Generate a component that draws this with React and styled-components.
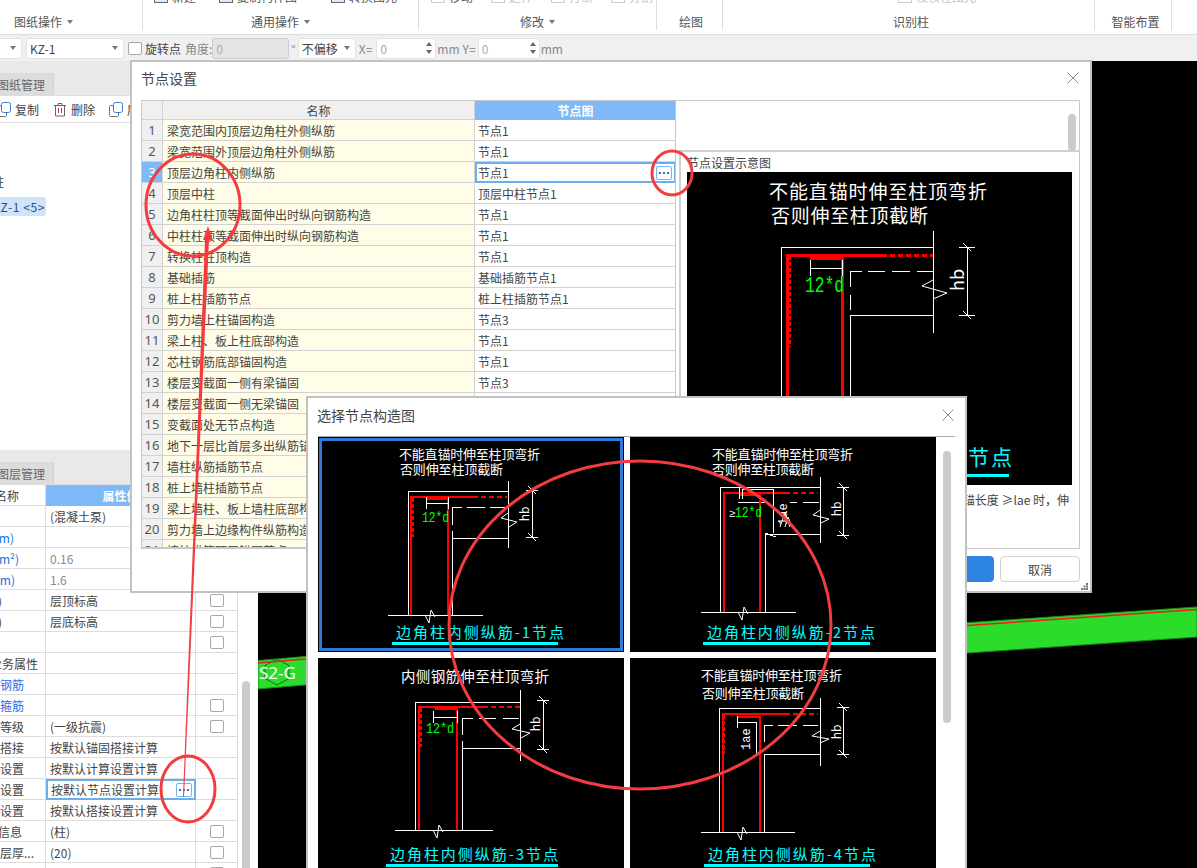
import React from 'react';
import styled, { createGlobalStyle } from 'styled-components';

const GlobalStyle = createGlobalStyle`
  html, body {
    margin: 0;
    height: 100%;
    overflow: hidden;
    background: #fff;
    font-family: "Noto Sans CJK SC", "Noto Sans", sans-serif;
    font-size: 12px;
    color: #444;
  }
  * { box-sizing: border-box; }
`;

const Page = styled.div`
  position: relative;
  width: 1197px;
  height: 868px;
  overflow: hidden;
  display: flex;
  flex-direction: column;
`;

/* ribbon */
const Ribbon = styled.div`
  display: flex;
  height: 35px;
  border-bottom: 1px solid #ddd;
  background: #fff;
  flex: none;
`;

const Group = styled.div`
  width: ${(p) => p.$w}px;
  margin-left: ${(p) => p.$ml || 0}px;
  height: 30px;
  border-right: ${(p) => (p.$last ? 'none' : '1px solid #ddd')};
  display: flex;
  flex-direction: column;
  flex: none;
`;

const Strip = styled.div`
  height: 7px;
  overflow: hidden;
  display: flex;
  align-items: flex-end;
  padding-left: ${(p) => p.$pad}px;
  gap: ${(p) => p.$gap || 0}px;
`;

const StripTool = styled.div`
  display: flex;
  align-items: center;
  gap: 4px;
  height: 16px;
  margin-bottom: 3px;
  margin-left: ${(p) => p.$ml || 0}px;
  flex: none;
  color: ${(p) => (p.$off ? '#c4c4c4' : '#555')};
`;

const StripIcon = styled.span`
  width: 14px;
  height: 14px;
  border: 1px solid ${(p) => (p.$off ? '#ccc' : '#667')};
  background: ${(p) => (p.$off ? '#fff' : '#dfe9f7')};
  flex: none;
`;

const GroupLabel = styled.div`
  flex: 1;
  display: flex;
  align-items: center;
  justify-content: center;
  gap: 5px;
  padding-top: 6px;
  padding-left: ${(p) => p.$shift || 0}px;
  color: #555;
  line-height: 16px;
`;

const Caret = styled.span`
  width: 0;
  height: 0;
  flex: none;
  border-left: 3.5px solid transparent;
  border-right: 3.5px solid transparent;
  border-top: 4px solid #777;
`;

/* options bar */
const OptionsBar = styled.div`
  display: flex;
  align-items: center;
  height: 26px;
  background: #f0f0f0;
  flex: none;
`;

const Select = styled.div`
  height: 21px;
  width: ${(p) => p.$w}px;
  margin-left: ${(p) => p.$ml || 0}px;
  background: #fff;
  border: 1px solid #e2e2e2;
  border-radius: 3px;
  display: flex;
  align-items: center;
  justify-content: space-between;
  padding: 0 5px 0 3px;
  color: #444;
  flex: none;
`;

const Check = styled.span`
  width: 14px;
  height: 13px;
  margin-left: ${(p) => p.$ml || 0}px;
  background: #fff;
  border: 1px solid #a8a8a8;
  border-radius: 2px;
  flex: none;
  display: block;
`;

const OptionLabel = styled.span`
  margin-left: ${(p) => p.$ml || 0}px;
  color: ${(p) => (p.$dim ? '#888' : '#444')};
  white-space: nowrap;
  flex: none;
`;

const NumberBox = styled.div`
  height: 21px;
  width: ${(p) => p.$w}px;
  margin-left: ${(p) => p.$ml || 0}px;
  background: ${(p) => (p.$disabled ? '#e4e4e4' : '#fff')};
  border: 1px solid ${(p) => (p.$disabled ? '#c5ccd6' : '#e4e4e4')};
  border-radius: 3px;
  display: flex;
  align-items: center;
  justify-content: space-between;
  padding: 0 3px;
  color: #aaa;
  flex: none;
`;

const Spin = styled.span`
  display: flex;
  flex-direction: column;
  gap: 4px;
  i {
    display: block;
    width: 0;
    height: 0;
    border-left: 3px solid transparent;
    border-right: 3px solid transparent;
  }
  i:first-child { border-bottom: 4px solid #666; }
  i:last-child { border-top: 4px solid #666; }
`;

/* main */
const Main = styled.div`
  flex: 1;
  display: flex;
  min-height: 0;
`;

const LeftPanel = styled.div`
  width: 258px;
  flex: none;
  display: flex;
  flex-direction: column;
  background: #fff;
`;

const Section = styled.section`
  height: ${(p) => p.$h}px;
  flex: none;
  display: flex;
  flex-direction: column;
  overflow: hidden;
`;

const TabBar = styled.div`
  height: 35px;
  padding-top: 12px;
  background: #e9e9e9;
  flex: none;
  border-bottom: 1px solid #ddd;
`;

const Tab = styled.div`
  width: 54px;
  height: 22px;
  background: #dcdcdc;
  border-right: 1px solid #cfcfcf;
  display: flex;
  align-items: center;
  justify-content: flex-end;
  padding-right: 8px;
  color: #666;
  white-space: nowrap;
`;

const ToolRow = styled.div`
  height: 27px;
  flex: none;
  display: flex;
  align-items: center;
  gap: 14px;
  border-bottom: 1px solid #ddd;
`;

const ToolItem = styled.div`
  display: flex;
  align-items: center;
  gap: 4px;
  flex: none;
  color: #444;
`;

const Tree = styled.div`
  padding-top: 49px;
  display: flex;
  flex-direction: column;
  gap: 6px;
`;

const TreeItem = styled.div`
  width: 46px;
  height: 19px;
  display: flex;
  align-items: center;
  justify-content: flex-end;
  white-space: pre;
  padding-right: ${(p) => p.$end}px;
  background: ${(p) => (p.$active ? '#cfe3fa' : 'transparent')};
  border-radius: 0 3px 3px 0;
  letter-spacing: ${(p) => (p.$active ? 0.6 : 0)}px;
  color: ${(p) => (p.$active ? '#23527f' : '#444')};
`;

const PropsArea = styled.div`
  flex: 1;
  display: flex;
  min-height: 0;
`;

const PropsTable = styled.div`
  width: 238px;
  flex: none;
  border-right: 1px solid #ddd;
`;

const PropRow = styled.div`
  display: grid;
  grid-template-columns: 46px 150px 41px;
  height: 21px;
`;

const PropName = styled.div`
  display: flex;
  align-items: center;
  justify-content: flex-end;
  overflow: hidden;
  white-space: nowrap;
  padding-right: ${(p) => p.$end || 0}px;
  border-right: 1px solid #ddd;
  border-bottom: 1px solid #ddd;
  color: ${(p) => (p.$blue ? '#1a6fe6' : '#444')};
`;

const PropValue = styled.div`
  position: relative;
  display: flex;
  align-items: center;
  padding-left: ${(p) => (p.$active ? 3 : 4)}px;
  border-right: ${(p) => (p.$active ? '2px solid #6aaeee' : '1px solid #ddd')};
  border-bottom: ${(p) => (p.$active ? '2px solid #6aaeee' : '1px solid #ddd')};
  border-left: ${(p) => (p.$active ? '2px solid #6aaeee' : 'none')};
  border-top: ${(p) => (p.$active ? '2px solid #6aaeee' : 'none')};
  color: ${(p) => (p.$dim ? '#888' : '#444')};
  white-space: nowrap;
`;

const PropCheck = styled.div`
  display: flex;
  align-items: center;
  justify-content: center;
  border-bottom: 1px solid #ddd;
`;

const HeaderValue = styled.div`
  background: #7fb9f8;
  color: #fff;
  font-weight: 700;
  display: flex;
  align-items: center;
  justify-content: center;
  border-right: 1px solid #ddd;
`;

const Gutter = styled.div`
  flex: 1;
  padding: ${(p) => p.$top}px 0 0 ${(p) => p.$left}px;
`;

const Thumb = styled.div`
  width: 8px;
  height: ${(p) => p.$h}px;
  background: #cbcbcb;
  border-radius: 4px;
`;

const MoreButton = styled.span`
  position: absolute;
  right: ${(p) => p.$right}px;
  top: 2px;
  width: 16px;
  height: 14px;
  background: #fff;
  border: 1px solid #7ab4ee;
  border-radius: 2px;
  display: flex;
  align-items: center;
  justify-content: center;
  gap: 2px;
  i {
    width: 2px;
    height: 2px;
    background: #2f6fc6;
    display: block;
  }
`;

const Canvas = styled.div`
  flex: 1;
  background: #000;
  position: relative;
  overflow: hidden;
`;

const CanvasDrawing = styled.svg`
  display: block;
  width: 100%;
  height: 100%;
`;

const BandLabel = styled.text`
  font-family: "Noto Sans", sans-serif;
  font-size: 17px;
  fill: #fff;
`;

/* dialogs */
const Dialog = styled.div`
  position: absolute;
  left: ${(p) => p.$left}px;
  top: ${(p) => p.$top}px;
  width: ${(p) => p.$w}px;
  height: ${(p) => p.$h}px;
  background: #fff;
  border: 2px solid #c2c2c2;
  display: flex;
  flex-direction: column;
`;

const DialogHead = styled.div`
  height: 38px;
  flex: none;
  display: flex;
  align-items: center;
  justify-content: space-between;
  padding: 0 ${(p) => p.$right}px ${(p) => p.$bottom}px 9px;
  font-size: 14px;
  color: #444;
`;

const CloseX = () => (
  <svg width="12" height="12" viewBox="0 0 12 12">
    <path d="M0.5 0.5 11.5 11.5M11.5 0.5 0.5 11.5" stroke="#8f8f8f" strokeWidth="1" fill="none" />
  </svg>
);

const SettingsBody = styled.div`
  margin: 0 10px 0 9px;
  height: 449px;
  flex: none;
  display: flex;
  border: 1px solid #c8c8c8;
  border-left: none;
`;

const NodeTable = styled.div`
  width: 535px;
  flex: none;
  overflow: hidden;
  border-left: 1px solid #c8c8c8;
  border-right: 1px solid #c8c8c8;
  border-bottom: 1px solid #c8c8c8;
`;

const NodeRow = styled.div`
  display: grid;
  grid-template-columns: 21px 312px 201px;
  height: ${(p) => (p.$head ? 19 : 21)}px;
`;

const IndexCell = styled.div`
  display: flex;
  align-items: center;
  justify-content: center;
  background: ${(p) => (p.$active ? '#7fb9f8' : '#f0f0f0')};
  color: ${(p) => (p.$active ? '#fff' : '#555')};
  border-right: 1px solid #d2d2d2;
  border-bottom: 1px solid #d2d2d2;
  font-family: "Noto Sans", sans-serif;
  font-size: 13px;
`;

const NameCell = styled.div`
  display: flex;
  align-items: center;
  justify-content: ${(p) => (p.$head ? 'center' : 'flex-start')};
  padding-left: ${(p) => (p.$head ? 0 : 4)}px;
  background: ${(p) => (p.$head ? '#f0f0f0' : '#fffde8')};
  border-right: 1px solid #d2d2d2;
  border-bottom: 1px solid #d2d2d2;
  white-space: nowrap;
  overflow: hidden;
`;

const ValueCell = styled.div`
  position: relative;
  display: flex;
  align-items: center;
  padding-left: ${(p) => (p.$active ? 1 : 3)}px;
  border: ${(p) => (p.$active ? '2px solid #6aaeee' : 'none')};
  border-bottom: ${(p) => (p.$active ? '2px solid #6aaeee' : '1px solid #d2d2d2')};
`;

const HeadNode = styled.div`
  background: #7fb9f8;
  color: #fff;
  font-weight: 700;
  display: flex;
  align-items: center;
  justify-content: center;
`;

const PreviewSide = styled.div`
  flex: 1;
  min-width: 0;
  display: flex;
  flex-direction: column;
`;

const PreviewTop = styled.div`
  height: 49px;
  flex: none;
  display: flex;
  justify-content: flex-end;
  padding: 13px 3px 0 0;
`;

const PreviewPanel = styled.div`
  flex: 1;
  margin-left: 3px;
  border: 2px solid #d0d0d0;
  border-bottom: none;
  border-right: none;
  padding: 0 7px 0 6px;
  min-height: 0;
`;

const PreviewCaption = styled.div`
  height: 20px;
  line-height: 22px;
  white-space: nowrap;
  color: #444;
`;

const PreviewNote = styled.div`
  display: flex;
  justify-content: flex-end;
  padding: 6px 3px 0 0;
  white-space: nowrap;
  overflow: hidden;
  color: #444;
`;

const DialogFoot = styled.div`
  display: flex;
  justify-content: flex-end;
  gap: 6px;
  padding: 7px 10px 0 0;
`;

const Button = styled.button`
  width: 80px;
  height: 26px;
  border-radius: 4px;
  border: 1px solid ${(p) => (p.$primary ? '#2e84e2' : '#cfcfcf')};
  background: ${(p) => (p.$primary ? '#2e84e2' : '#fff')};
  color: ${(p) => (p.$primary ? '#fff' : '#444')};
  font-family: inherit;
  font-size: 12px;
  padding: 0;
`;

const Grip = styled.svg`
  position: absolute;
  right: 2px;
  bottom: 1px;
`;

const PickerBody = styled.div`
  margin-left: 10px;
  width: 637px;
  border-top: 1px solid #aaa;
  display: flex;
  flex: 1;
  min-height: 0;
`;

const PickerGrid = styled.div`
  width: 618px;
  flex: none;
  display: grid;
  grid-template-columns: 306px 306px;
  grid-auto-rows: 215px;
  column-gap: 6px;
  row-gap: 6px;
`;

const NodeCard = styled.div`
  background: #000;
  position: relative;
  box-shadow: ${(p) => (p.$selected ? 'inset 0 0 0 1px #000, inset 0 0 0 4px #2e7bd9' : 'none')};
`;

const DiagramSvg = styled.svg`
  display: block;
`;

const Ink = styled.path`
  fill: none;
  stroke: ${(p) => p.$color || '#fff'};
  stroke-width: ${(p) => p.$w || 1}px;
  stroke-dasharray: ${(p) => p.$dash || 'none'};
  shape-rendering: crispEdges;
`;

const DiagramText = styled.text`
  font-family: ${(p) => (p.$mono ? '"Liberation Mono", monospace' : '"Noto Sans CJK SC", sans-serif')};
  font-size: ${(p) => p.$size}px;
  fill: ${(p) => p.$color || '#fff'};
`;

const Underline = styled.rect`
  fill: #0ff;
`;

const MarkerLayer = styled.svg`
  position: absolute;
  left: 0;
  top: 0;
  pointer-events: none;
`;

const CopyGlyph = ({ ml }) => (
  <svg width="14" height="15" viewBox="0 0 14 15" style={{ marginLeft: ml }}>
    <rect x="0.5" y="3.5" width="9" height="11" rx="1" fill="#fff" stroke="#777" />
    <rect x="4.5" y="0.5" width="9" height="10" rx="2" fill="#fff" stroke="#2f7fe0" />
  </svg>
);

const TrashGlyph = () => (
  <svg width="14" height="15" viewBox="0 0 14 15">
    <path d="M1 3.5H13M5 3.500V1.500H9V3.500M2.500 3.500V14H11.500V3.500" fill="none" stroke="#666" />
    <path d="M5.500 6V11M8.500 6V11" stroke="#c33" />
  </svg>
);

const Diagram = ({ d, width = 306, height = 215 }) => {
  const t = d.thick || 2;
  const tick = d.tick || 6;
  const { hb, dim } = d;
  const bx = d.breakX;
  const gy = d.groundY;
  const whites = [
    `M${d.outerX} ${d.topY}H${d.beamX}`,
    `M${d.outerX} ${d.topY}V${gy}`,
    `M${d.beamX} ${d.beamY[0]}V${d.beamY[1]}`,
    `M${d.ground[0]} ${gy}H${d.ground[1]}`,
    ...d.innerV.map(([a, b]) => `M${d.innerX} ${a}V${b}`),
    ...d.dashes.map(([a, b]) => `M${a} ${d.dashY}H${b}`),
    `M${d.innerX} ${d.beamBottom}H${d.beamX}`,
  ].join('');
  const hbPath = `M${hb.x} ${hb.y1}V${hb.y2}M${hb.x - tick} ${hb.y1}H${hb.x + tick}M${hb.x - tick} ${hb.y2}H${hb.x + tick}`;
  const hbSlash = `M${hb.x - 4} ${hb.y1 - 4}L${hb.x + 4} ${hb.y1 + 4}M${hb.x - 4} ${hb.y2 - 4}L${hb.x + 4} ${hb.y2 + 4}`;
  return (
    <DiagramSvg width={width} height={height} viewBox={`0 0 ${width} ${height}`}>
      {d.titles.map(([text, x, y, len]) => (
        <DiagramText key={text} x={x} y={y} $size={d.titleSize || 13} textLength={len} lengthAdjust="spacing">
          {text}
        </DiagramText>
      ))}
      <Ink d={whites} />
      <path d={`M${d.brk.map((p) => p.join(' ')).join('L')}`} fill="none" stroke="#fff" />
      <path d={`M${bx} ${gy}L${bx + 4} ${gy + 8}L${bx + 6} ${gy - 5}L${bx + 10} ${gy + 2}`} fill="none" stroke="#fff" />
      <Ink d={hbPath} />
      <path d={hbSlash} fill="none" stroke="#fff" />
      <DiagramText x={hb.tx} y={hb.ty} $size={hb.size || 12} transform={`rotate(-90 ${hb.tx} ${hb.ty})`} textAnchor="middle">
        hb
      </DiagramText>
      <Ink $color="#f00" $w={t} d={`M${d.redX} ${gy}V${d.redY}H${d.redEnd}`} />
      <Ink $color="#f00" $w={t} $dash="5 3" d={`M${d.redEnd} ${d.redY}H${d.redDash}`} />
      {d.redLeft && <Ink $color="#f00" $w={t} $dash="4 2" d={`M${d.redLeft[0]} ${d.redLeft[1]}V${d.redLeft[2]}`} />}
      <Ink $color="#f00" $w={t} d={`M${d.barX} ${gy}V${d.barY}H${d.barLeft}`} />
      {dim && <Ink d={`M${dim.x1} ${dim.y}H${dim.x2}M${dim.x1} ${dim.y - tick}V${dim.y + tick}M${dim.x2} ${dim.y - tick}V${dim.y + tick}`} />}
      {d.label && (
        <DiagramText $mono $color="#0f0" x={d.label[1]} y={d.label[2]} $size={d.labelSize || 15} textLength={d.label[3]} lengthAdjust="spacingAndGlyphs">
          {d.label[0]}
        </DiagramText>
      )}
      {d.extra}
      <DiagramText $color="#0ff" x={d.caption[1]} y={d.caption[2]} $size={d.captionSize || 15} textLength={d.caption[3]} lengthAdjust="spacing">
        {d.caption[0]}
      </DiagramText>
      <Underline x={d.line[0]} y={d.line[2]} width={d.line[1] - d.line[0]} height={d.lineH || 3} />
    </DiagramSvg>
  );
};

const LINE_1 = '不能直锚时伸至柱顶弯折';
const LINE_2 = '否则伸至柱顶截断';

const CARDS = [
  {
    selected: true,
    titles: [[LINE_1, 81, 22, 141], [LINE_2, 82, 37, 103]],
    outerX: 90, topY: 54, beamX: 190, beamY: [44, 111], groundY: 178, ground: [70, 165],
    innerX: 134, innerV: [[70, 88], [94, 178]], dashY: 70, dashes: [[134, 144], [149, 167], [172, 189]],
    beamBottom: 101, brk: [[190, 76], [183, 81], [199, 85], [191, 90]],
    hb: { x: 214, y1: 53, y2: 100, tx: 211, ty: 77 },
    redX: 93, redY: 60, redEnd: 155, redDash: 189, redLeft: [95, 61, 100],
    barX: 130, barY: 62, barLeft: 108, dim: { y: 66, x1: 108, x2: 130 },
    label: ['12*d', 104, 85, 27], breakX: 107,
    caption: ['边角柱内侧纵筋-1节点', 78, 201, 168], line: [74, 240, 205],
  },
  {
    titles: [[LINE_1, 82, 22, 141], [LINE_2, 82, 37, 102]],
    outerX: 90, topY: 50, beamX: 190, beamY: [40, 106], groundY: 175, ground: [71, 166],
    innerX: 135, innerV: [[96, 175]], dashY: 65, dashes: [[108, 135], [160, 167], [173, 189]],
    beamBottom: 97, brk: [[190, 73], [183, 78], [199, 82], [191, 86]],
    hb: { x: 213, y1: 50, y2: 98, tx: 211, ty: 72 },
    redX: 94, redY: 56, redEnd: 155, redDash: 188,
    barX: 130, barY: 58, barLeft: 109, label: ['12*d', 105, 80, 27], breakX: 108,
    extra: (
      <>
        <Ink d="M109 50V62M143 52H112V62M143 52V96M135 96L146 100" />
        <DiagramText $mono x={157} y={88} $size={12} transform="rotate(-90 157 88)">1ae</DiagramText>
        <DiagramText $mono x={99} y={80} $size={11}>≥</DiagramText>
        <path d="M150 90L155 76L160 90M155 90L158 80L162 90" fill="none" stroke="#fff" />
      </>
    ),
    caption: ['边角柱内侧纵筋-2节点', 77, 201, 168], line: [73, 240, 205],
  },
  {
    titles: [['内侧钢筋伸至柱顶弯折', 83, 24, 148]],
    titleSize: 14.5,
    outerX: 97, topY: 44, beamX: 202, beamY: [32, 103], groundY: 172, ground: [77, 175],
    innerX: 144, innerV: [[60, 77], [83, 172]], dashY: 60, dashes: [[144, 155], [161, 178], [185, 201]],
    beamBottom: 90, brk: [[202, 66], [194, 71], [212, 75], [203, 80]],
    hb: { x: 225, y1: 42, y2: 91, tx: 222, ty: 66 },
    redX: 101, redY: 49, redEnd: 165, redDash: 202, redLeft: [103, 50, 89],
    barX: 139, barY: 51, barLeft: 117, dim: { y: 59, x1: 115, x2: 139 },
    label: ['12*d', 108, 75, 28], breakX: 115,
    caption: ['边角柱内侧纵筋-3节点', 72, 202, 168], line: [68, 240, 206],
  },
  {
    titles: [[LINE_1, 71, 22, 141], [LINE_2, 72, 40, 102]],
    outerX: 89, topY: 50, beamX: 190, beamY: [40, 108], groundY: 174, ground: [71, 165],
    innerX: 134, innerV: [[67, 84], [96, 174]], dashY: 67, dashes: [[134, 143], [148, 167], [173, 188]],
    beamBottom: 96, brk: [[190, 73], [182, 78], [199, 81], [190, 85]],
    hb: { x: 213, y1: 49, y2: 96, tx: 211, ty: 74 },
    redX: 93, redY: 56, redEnd: 155, redDash: 188, redLeft: [94, 57, 96],
    barX: 130, barY: 59, barLeft: 108, breakX: 107,
    extra: (
      <>
        <Ink d="M107 64H126V96M107 58V70" />
        <DiagramText $mono x={120} y={92} $size={12} transform="rotate(-90 120 92)">1ae</DiagramText>
      </>
    ),
    caption: ['边角柱内侧纵筋-4节点', 78, 202, 168], line: [74, 240, 206],
  },
];

const PREVIEW = {
  titles: [[LINE_1, 82, 27, 218], [LINE_2, 84, 51, 157]],
  titleSize: 19,
  thick: 3,
  tick: 8,
  outerX: 94, topY: 75, beamX: 246, beamY: [59, 161], groundY: 400, ground: [50, 300],
  innerX: 163, innerV: [[99, 115], [123, 138], [143, 400]], dashY: 99,
  dashes: [[163, 175], [181, 198], [205, 223], [230, 246]],
  beamBottom: 143, brk: [[246, 108], [235, 114], [260, 121], [246, 127]],
  hb: { x: 280, y1: 75, y2: 143, tx: 277, ty: 108, size: 18 },
  redX: 100, redY: 83, redEnd: 195, redDash: 246, redLeft: [102, 84, 175],
  barX: 155, barY: 86, barLeft: 123, dim: { y: 96, x1: 123, x2: 155 },
  label: ['12*d', 118, 120, 39], labelSize: 22, breakX: 130,
  caption: ['边角柱内侧纵筋-1节点', 97, 293, 228], captionSize: 21,
  line: [90, 322, 302], lineH: 3,
};

const NODE_ROWS = [
  ['梁宽范围内顶层边角柱外侧纵筋', '节点1'],
  ['梁宽范围外顶层边角柱外侧纵筋', '节点1'],
  ['顶层边角柱内侧纵筋', '节点1'],
  ['顶层中柱', '顶层中柱节点1'],
  ['边角柱柱顶等截面伸出时纵向钢筋构造', '节点1'],
  ['中柱柱顶等截面伸出时纵向钢筋构造', '节点1'],
  ['转换柱柱顶构造', '节点1'],
  ['基础插筋', '基础插筋节点1'],
  ['桩上柱插筋节点', '桩上柱插筋节点1'],
  ['剪力墙上柱锚固构造', '节点3'],
  ['梁上柱、板上柱底部构造', '节点1'],
  ['芯柱钢筋底部锚固构造', '节点1'],
  ['楼层变截面一侧有梁锚固', '节点3'],
  ['楼层变截面一侧无梁锚固', '节点1'],
  ['变截面处无节点构造', '节点1'],
  ['地下一层比首层多出纵筋锚固', '节点1'],
  ['墙柱纵筋插筋节点', '节点1'],
  ['桩上墙柱插筋节点', '节点1'],
  ['梁上墙柱、板上墙柱底部构造', '节点1'],
  ['剪力墙上边缘构件纵筋构造', '节点1'],
  ['墙柱纵筋顶层锚固节点', '节点1'],
];

const PROP_ROWS = [
  { name: '', value: '(混凝土泵)' },
  { name: '(m)', end: 31, blue: true, value: '' },
  { name: '(m²)', end: 26, blue: true, value: '0.16', dim: true },
  { name: '(m)', end: 30, blue: true, value: '1.6', dim: true },
  { name: '(m)', end: 43, value: '层顶标高', check: true },
  { name: '(m)', end: 43, value: '层底标高', check: true },
  { name: '', value: '', check: true },
  { name: '业务属性', end: 7, value: '' },
  { name: '他钢筋', end: 21, blue: true, value: '' },
  { name: '他箍筋', end: 21, blue: true, value: '', check: true },
  { name: '抗震等级', end: 21, value: '(一级抗震)', check: true },
  { name: '锚固搭接', end: 21, value: '按默认锚固搭接计算' },
  { name: '计算设置', end: 21, value: '按默认计算设置计算' },
  { name: '节点设置', end: 21, value: '按默认节点设置计算', active: true },
  { name: '搭接设置', end: 21, value: '按默认搭接设置计算' },
  { name: '钢筋信息', end: 23, value: '(柱)', check: true },
  { name: '保护层厚...', end: 11, value: '(20)', check: true },
  { name: '', value: '', check: true },
];

const Dots = () => (
  <>
    <i />
    <i />
    <i />
  </>
);

export default function App() {
  return (
    <Page>
      <GlobalStyle />
      <Ribbon>
        <Group $w={198} $ml={-55}>
          <Strip $pad={0} />
          <GroupLabel>图纸操作<Caret /></GroupLabel>
        </Group>
        <Group $w={276}>
          <Strip $pad={11} $gap={23}>
            <StripTool><StripIcon />新建</StripTool>
            <StripTool><StripIcon />复制构件图</StripTool>
            <StripTool $ml={11}><StripIcon />转换图元</StripTool>
          </Strip>
          <GroupLabel>通用操作<Caret /></GroupLabel>
        </Group>
        <Group $w={238}>
          <Strip $pad={12} $gap={18}>
            <StripTool><StripIcon $off />移动</StripTool>
            <StripTool $off><StripIcon $off />延伸</StripTool>
            <StripTool $off><StripIcon $off />打断</StripTool>
            <StripTool $off><StripIcon $off />分割</StripTool>
          </Strip>
          <GroupLabel>修改<Caret /></GroupLabel>
        </Group>
        <Group $w={66}>
          <Strip $pad={0} />
          <GroupLabel $shift={3}>绘图</GroupLabel>
        </Group>
        <Group $w={372}>
          <Strip $pad={175}>
            <StripTool $off><StripIcon $off />校核柱图元</StripTool>
          </Strip>
          <GroupLabel $shift={5}>识别柱</GroupLabel>
        </Group>
        <Group $w={77}>
          <Strip $pad={0} />
          <GroupLabel $shift={5}>智能布置</GroupLabel>
        </Group>
        <Group $w={25} $last>
          <Strip $pad={8} />
        </Group>
      </Ribbon>

      <OptionsBar>
        <Select $w={62} $ml={-40}>柱<Caret /></Select>
        <Select $w={98} $ml={4}>KZ-1<Caret /></Select>
        <Check $ml={4} />
        <OptionLabel $ml={3}>旋转点</OptionLabel>
        <OptionLabel $ml={4} $dim>角度:</OptionLabel>
        <NumberBox $w={77} $ml={0} $disabled>0</NumberBox>
        <OptionLabel $ml={2} $dim>°</OptionLabel>
        <Select $w={58} $ml={2}>不偏移<Caret /></Select>
        <OptionLabel $ml={3} $dim>X=</OptionLabel>
        <NumberBox $w={60} $ml={4}>0<Spin><i /><i /></Spin></NumberBox>
        <OptionLabel $ml={1} $dim>mm</OptionLabel>
        <OptionLabel $ml={3} $dim>Y=</OptionLabel>
        <NumberBox $w={62} $ml={2}>0<Spin><i /><i /></Spin></NumberBox>
        <OptionLabel $ml={1} $dim>mm</OptionLabel>
      </OptionsBar>

      <Main>
        <LeftPanel>
          <Section $h={389}>
            <TabBar><Tab>图纸管理</Tab></TabBar>
            <ToolRow>
              <ToolItem><CopyGlyph ml={-3} />复制</ToolItem>
              <ToolItem><TrashGlyph />删除</ToolItem>
              <ToolItem><CopyGlyph ml={0} />层间</ToolItem>
            </ToolRow>
            <Tree>
              <TreeItem $end={42}>柱</TreeItem>
              <TreeItem $end={1} $active>KZ-1 &lt;5&gt;</TreeItem>
            </Tree>
          </Section>
          <Section $h={418}>
            <TabBar><Tab>图层管理</Tab></TabBar>
            <PropsArea>
              <PropsTable>
                <PropRow>
                  <PropName $end={26}>名称</PropName>
                  <HeaderValue>属性值</HeaderValue>
                  <PropCheck />
                </PropRow>
                {PROP_ROWS.map((r, i) => (
                  <PropRow key={i}>
                    <PropName $end={r.end} $blue={r.blue}>{r.name}</PropName>
                    <PropValue $active={r.active} $dim={r.dim}>
                      {r.value}
                      {r.active && <MoreButton $right={2}><Dots /></MoreButton>}
                    </PropValue>
                    <PropCheck>{r.check && <Check />}</PropCheck>
                  </PropRow>
                ))}
              </PropsTable>
              <Gutter $top={196} $left={4}><Thumb $h={220} /></Gutter>
            </PropsArea>
          </Section>
        </LeftPanel>
        <Canvas>
          <CanvasDrawing viewBox="0 0 939 807">
            <polygon points="0,599.500 47,595.500 709,561.700 939,546 939,576 709,592 47,624 0,628" fill="#2bdc2b" stroke="#188a18" strokeWidth="1" />
            <polygon points="19,598 31,604.500 31,617.500 19,624 7,617.500 7,604.500" fill="none" stroke="#12701c" strokeWidth="1" />
            <BandLabel x="1" y="618">S2-G</BandLabel>
            <polyline points="0,602 47,598 709,564.500 939,548.500" fill="none" stroke="#ee1c1c" strokeWidth="1.500" />
          </CanvasDrawing>
        </Canvas>
      </Main>

      <Dialog $left={130} $top={60} $w={962} $h={533}>
        <DialogHead $right={11} $bottom={6}>节点设置<CloseX /></DialogHead>
        <SettingsBody>
          <NodeTable>
            <NodeRow $head>
              <IndexCell />
              <NameCell $head>名称</NameCell>
              <HeadNode>节点图</HeadNode>
            </NodeRow>
            {NODE_ROWS.map(([name, node], i) => (
              <NodeRow key={name}>
                <IndexCell $active={i === 2}>{i + 1}</IndexCell>
                <NameCell>{name}</NameCell>
                <ValueCell $active={i === 2}>
                  {node}
                  {i === 2 && <MoreButton $right={2}><Dots /></MoreButton>}
                </ValueCell>
              </NodeRow>
            ))}
          </NodeTable>
          <PreviewSide>
            <PreviewTop><Thumb $h={37} /></PreviewTop>
            <PreviewPanel>
              <PreviewCaption>节点设置示意图</PreviewCaption>
              <NodeCard>
                <Diagram d={PREVIEW} width={384} height={313} />
              </NodeCard>
              <PreviewNote>纵筋伸至柱顶弯折，当直锚长度 ≥lae 时，伸</PreviewNote>
            </PreviewPanel>
          </PreviewSide>
        </SettingsBody>
        <DialogFoot>
          <Button $primary>确定</Button>
          <Button>取消</Button>
        </DialogFoot>
        <Grip width="7" height="7" viewBox="0 0 7 7">
          <path d="M5 0h2v2H5zM2.500 2.500h2v2h-2zM5 2.500h2v2H5zM0 5h2v2H0zM2.500 5h2v2h-2zM5 5h2v2H5z" fill="#777" />
        </Grip>
      </Dialog>

      <Dialog $left={306} $top={396} $w={661} $h={480}>
        <DialogHead $right={11} $bottom={5}>选择节点构造图<CloseX /></DialogHead>
        <PickerBody>
          <PickerGrid>
            {CARDS.map((c) => (
              <NodeCard key={c.caption[0]} $selected={c.selected}>
                <Diagram d={c} />
              </NodeCard>
            ))}
          </PickerGrid>
          <Gutter $top={14} $left={7}><Thumb $h={272} /></Gutter>
        </PickerBody>
      </Dialog>

      <MarkerLayer width="1197" height="868" viewBox="0 0 1197 868">
        <g fill="none" stroke="#f43c40" strokeWidth="3">
          <ellipse cx="193" cy="205" rx="47" ry="51" />
          <ellipse cx="672" cy="173" rx="20" ry="22" />
          <ellipse cx="188" cy="789" rx="27" ry="33" />
          <ellipse cx="640" cy="625" rx="191" ry="164" />
        </g>
        <polygon points="183,797 184,797 209,240 213,241 208,226 203,240 205,240" fill="#f43c40" />
      </MarkerLayer>
    </Page>
  );
}
